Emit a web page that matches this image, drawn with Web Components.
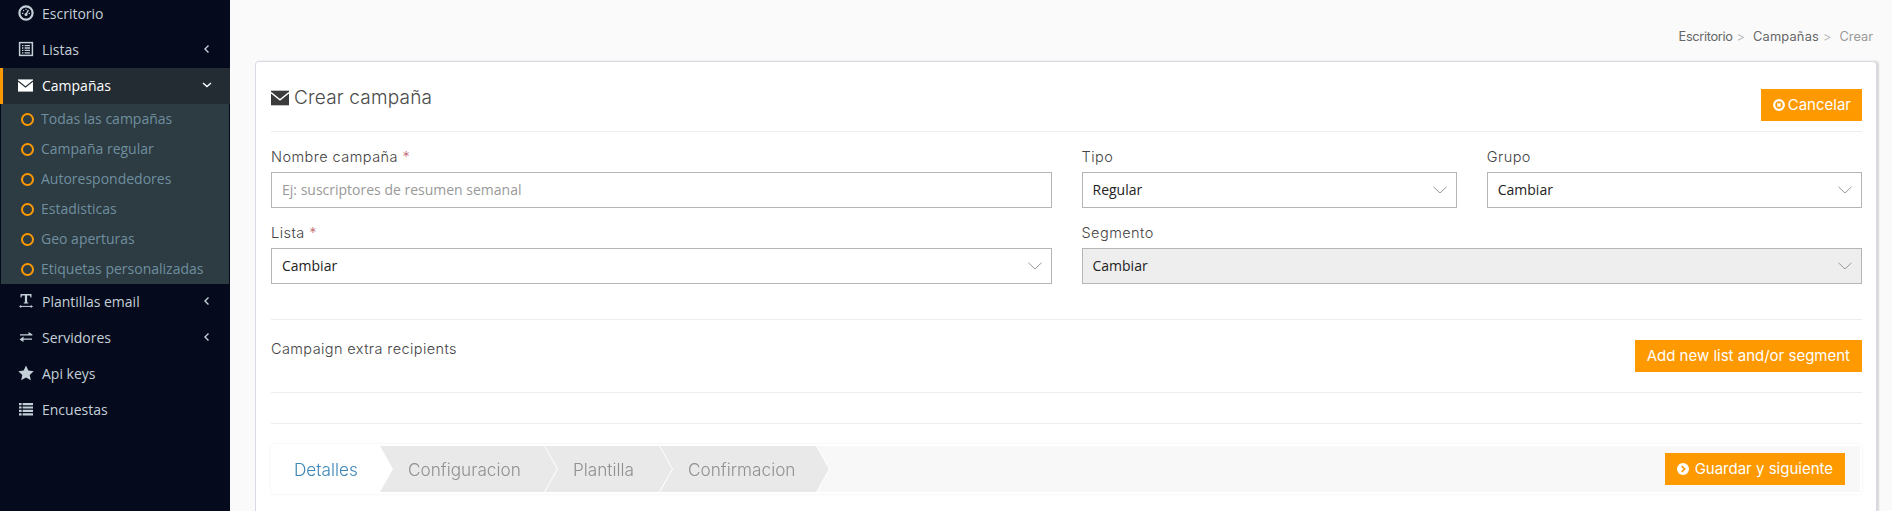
<!DOCTYPE html>
<html lang="es">
<head>
<meta charset="utf-8">
<title>Crear campaña</title>
<style>
    html, body { margin: 0; height: 100%; overflow: hidden; background: #fafafa; }
</style>
</head>
<body>
<app-shell>
    <side-nav slot="nav">
        <nav-item icon="gauge">Escritorio</nav-item>
        <nav-item icon="listalt" arrow="left">Listas</nav-item>
        <nav-item icon="envelope" arrow="down" active>Campañas</nav-item>
        <sub-menu>
            <sub-item>Todas las campañas</sub-item>
            <sub-item>Campaña regular</sub-item>
            <sub-item>Autorespondedores</sub-item>
            <sub-item>Estadisticas</sub-item>
            <sub-item>Geo aperturas</sub-item>
            <sub-item>Etiquetas personalizadas</sub-item>
        </sub-menu>
        <nav-item icon="textwidth" arrow="left">Plantillas email</nav-item>
        <nav-item icon="exchange" arrow="left">Servidores</nav-item>
        <nav-item icon="star">Api keys</nav-item>
        <nav-item icon="list">Encuestas</nav-item>
    </side-nav>
    <bread-crumbs>
        <crumb-link style="letter-spacing:-.35px">Escritorio</crumb-link>
        <crumb-link style="letter-spacing:.2px">Campañas</crumb-link>
        <crumb-link current>Crear</crumb-link>
    </bread-crumbs>
    <campaign-card>
        <span slot="title">Crear campaña</span>
        <action-button slot="action" icon="cancel">Cancelar</action-button>
        <form-grid>
            <form-field label="Nombre campaña" required>
                <text-input placeholder="Ej: suscriptores de resumen semanal"></text-input>
            </form-field>
            <split-fields>
                <form-field label="Tipo"><select-box>Regular</select-box></form-field>
                <form-field label="Grupo"><select-box>Cambiar</select-box></form-field>
            </split-fields>
            <form-field label="Lista" required><select-box>Cambiar</select-box></form-field>
            <form-field label="Segmento"><select-box disabled>Cambiar</select-box></form-field>
        </form-grid>
        <extra-recipients>
            <span>Campaign extra recipients</span>
            <action-button slot="action">Add new list and/or segment</action-button>
        </extra-recipients>
        <wizard-bar>
            <wizard-step current style="--w:119px">Detalles</wizard-step>
            <wizard-step style="--w:178px">Configuracion</wizard-step>
            <wizard-step style="--w:128px">Plantilla</wizard-step>
            <wizard-step style="--w:170px">Confirmacion</wizard-step>
            <action-button slot="action" icon="next">Guardar y siguiente</action-button>
        </wizard-bar>
    </campaign-card>
</app-shell>

<script>
const SANS = '"Open Sans", "Noto Sans", sans-serif';
const HEAD = 'Inter, "Open Sans", sans-serif';

const ICONS = {
    gauge: `<circle cx="8" cy="8" r="6.6" fill="none" stroke="currentColor" stroke-width="2.2"/>
            <path d="M8 9.5 10.4 5" stroke="currentColor" stroke-width="1.5"/>
            <circle cx="8" cy="9.6" r="1.5" fill="currentColor"/>
            <path d="M4 8.4h1.3M5.2 5.2l.9.8M8 3.8v1.2M12 8.4h-1.3" stroke="currentColor" stroke-width="1.1"/>`,
    listalt: `<rect x="1.6" y="1.6" width="12.8" height="12.8" fill="none" stroke="currentColor" stroke-width="1.5"/>
            <path d="M4 4.6h1.4M6.6 4.6H12M4 7h1.4M6.6 7H12M4 9.4h1.4M6.6 9.4H12M4 11.8h1.4M6.6 11.8H12" stroke="currentColor" stroke-width="1.3"/>`,
    envelope: `<path d="M0 1.5h16v13H0z" fill="currentColor"/>
            <path d="M0 3.2 8 9.6l8-6.4" fill="none" stroke="var(--icon-cut, #222c32)" stroke-width="1.2"/>`,
    textwidth: `<path d="M2.5 1h11v3.4h-1L12 2.6H9.1v6.6l1.2.5v.8H5.7v-.8l1.2-.5V2.6H4l-.5 1.8h-1z" fill="currentColor"/>
            <path d="M2.4 13.4h11.2" stroke="currentColor" stroke-width="1"/>
            <path d="M1 13.4l2.2-1.5v3zM15 13.4l-2.2-1.5v3z" fill="currentColor"/>`,
    exchange: `<path d="M2 5.2h8.5V3L14.5 5.6l-.2.8H2zM14 9.6H5.5V7.6L1.5 10.4l4 2.6v-2.2H14z" fill="currentColor"/>`,
    star: `<path d="M8 .6l2.3 4.9 5.4.7-4 3.7 1.1 5.4L8 12.6l-4.8 2.7 1.1-5.4-4-3.7 5.4-.7z" fill="currentColor"/>`,
    list: `<path d="M1 2h2.6v2.2H1zM4.6 2H15v2.2H4.6zM1 5.4h2.6v2.2H1zM4.6 5.4H15v2.2H4.6zM1 8.8h2.6V11H1zM4.6 8.8H15V11H4.6zM1 12.2h2.6v2.2H1zM4.6 12.2H15v2.2H4.6z" fill="currentColor"/>`,
    cancel: `<circle cx="8" cy="8" r="6.4" fill="none" stroke="currentColor" stroke-width="3"/>
            <path d="M5.8 5.8l4.4 4.4M10.2 5.8l-4.4 4.4" stroke="currentColor" stroke-width="2"/>`,
    next: `<circle cx="8" cy="8" r="8" fill="currentColor"/>
            <path d="M6.3 4.2 10.2 8l-3.9 3.8" fill="none" stroke="#ff9900" stroke-width="2.3"/>`
};

// small helper, every element here is just a template + open shadow root
function define(name, css, html) {
    customElements.define(name, class extends HTMLElement {
        constructor() {
            super();
            this.attachShadow({ mode: 'open' });
            this.shadowRoot.innerHTML = `<style>${css}</style>${typeof html === 'function' ? html(this) : html}`;
        }
    });
}

define('app-shell', `
    :host { display: grid; grid-template-columns: 230px 1fr; height: 511px; overflow: hidden; background: #fafafa; }
    .nav { background: #050a1c; overflow: hidden; }
    .main { min-width: 0; display: flex; flex-direction: column; }
`, `<div class="nav"><slot name="nav"></slot></div><div class="main"><slot></slot></div>`);

define('side-nav', `
    :host { display: block; margin-top: -4px; font: 400 14px ${SANS}; }
`, `<slot></slot>`);

define('nav-item', `
    :host { display: flex; align-items: center; height: 36px; color: #c4d0d8; box-sizing: border-box; padding: 0 0 2px 18px; }
    :host([active]) { background: #222c32; color: #fff; border-left: 3px solid #ff9900; padding-left: 15px; }
    svg.ico { width: 16px; height: 16px; flex: none; margin-right: 8px; color: #c4d0d8; }
    :host([active]) svg.ico { color: #fff; width: 15px; height: 15px; margin-right: 9px; }
    .label { flex: 1; }
    svg.arrow { width: 10px; height: 10px; margin-right: 18px; fill: none; stroke: currentColor; stroke-width: 1.4; }
`, el => {
    const arrow = el.getAttribute('arrow');
    const d = arrow === 'left' ? 'M6.5 1.5 3 5l3.5 3.5' : 'M1 3l4 3.5L9 3';
    return `<svg class="ico" viewBox="0 0 16 16">${ICONS[el.getAttribute('icon')]}</svg>
        <span class="label"><slot></slot></span>
        ${arrow ? `<svg class="arrow" viewBox="0 0 10 10"><path d="${d}"/></svg>` : ''}`;
});

define('sub-menu', `
    :host { display: block; background: #2d3b42; margin: 0 1px; }
`, `<slot></slot>`);

define('sub-item', `
    :host { display: flex; align-items: center; height: 30px; box-sizing: border-box; padding: 0 0 2px 20px; color: #6f8f9f; font-size: 14px; }
    i { width: 13px; height: 13px; box-sizing: border-box; border: 2.4px solid #ff9900; border-radius: 50%; margin: 2px 7px 0 0; }
`, `<i></i><slot></slot>`);

define('bread-crumbs', `
    :host { display: flex; justify-content: flex-end; align-items: center; height: 61px; padding: 11px 19px 0 0; box-sizing: border-box; font: 400 12.8px ${HEAD}; color: #666; }
`, `<slot></slot>`);

define('crumb-link', `
    :host { display: inline-flex; color: #666; }
    :host([current]) { color: #999; }
    b { font-weight: 400; color: #bbb; margin: 0 8px 0 4px; letter-spacing: 0; }
`, el => `<slot></slot>${el.hasAttribute('current') ? '' : '<b>&gt;</b>'}`);

define('campaign-card', `
    :host { display: block; flex: 1; margin: 0 15px 0 25px; background: #fff; border: 1px solid #d9d9e3; border-bottom: 0; border-radius: 4px 4px 0 0; box-shadow: 2px 0 2px rgba(0,0,0,.14); padding: 0 14px 0 15px; }
    .head { display: flex; justify-content: space-between; align-items: flex-start; padding: 22px 0 10px; border-bottom: 1px solid #eee; }
    h3 { margin: 0; display: flex; align-items: center; font: 300 19px/28px ${HEAD}; letter-spacing: .2px; color: #4a4a4a; }
    svg { width: 18px; height: 18px; margin-right: 5px; color: #3c3c3c; --icon-cut: #fff; }
    .act { margin-top: 5px; display: flex; }
`, `<div class="head">
        <h3><svg viewBox="0 0 16 16">${ICONS.envelope}</svg><slot name="title"></slot></h3>
        <div class="act"><slot name="action"></slot></div>
    </div>
    <slot></slot>`);

define('form-grid', `
    :host { display: grid; grid-template-columns: 1fr 1fr; gap: 15px 30px; padding: 15px 0 35px; border-bottom: 1px solid #eee; }
`, `<slot></slot>`);

define('split-fields', `
    :host { display: grid; grid-template-columns: 1fr 1fr; gap: 30px; }
`, `<slot></slot>`);

define('form-field', `
    :host { display: block; min-width: 0; }
    label { display: block; font: 300 14.5px/20px ${HEAD}; color: #444; margin-bottom: 5px; letter-spacing: .45px; }
    em { font-style: normal; color: #c0606a; }
`, el => `<label>${el.getAttribute('label')}${el.hasAttribute('required') ? ' <em>*</em>' : ''}</label><slot></slot>`);

define('text-input', `
    :host { display: block; }
    input { display: block; width: 100%; height: 36px; box-sizing: border-box; border: 1px solid #b5b5b5; padding: 0 10px 2px; outline: 0; font: 400 14px ${SANS}; color: #222; background: #fff; border-radius: 0; }
    input::placeholder { color: #999; opacity: 1; }
`, el => `<input type="text" placeholder="${el.getAttribute('placeholder')}">`);

define('select-box', `
    :host { display: flex; align-items: center; justify-content: space-between; height: 36px; box-sizing: border-box; border: 1px solid #b5b5b5; padding: 0 9px 2px 10px; font: 400 14px ${SANS}; color: #222; background: #fff; }
    :host([disabled]) { background: #eee; }
    svg { width: 14px; height: 8px; fill: none; stroke: #999; stroke-width: 1; margin-top: 2px; }
`, `<slot></slot><svg viewBox="0 0 14 8"><path d="M.5 .8 7 7l6.5-6.2"/></svg>`);

define('extra-recipients', `
    :host { display: flex; justify-content: space-between; align-items: flex-start; padding: 20px 0; border-bottom: 1px solid #eee; font: 300 14.5px/20px ${HEAD}; color: #444; letter-spacing: .4px; }
    .txt { margin-top: -1px; }
`, `<div class="txt"><slot></slot></div><slot name="action"></slot>`);

define('wizard-bar', `
    :host { display: block; padding-top: 30px; }
    .rule { border-top: 1px solid #eee; margin-bottom: 20px; }
    .outer { padding: 2px; background: #fff; border-radius: 4px; box-shadow: 0 0 3px rgba(0,0,0,.07); }
    .bar { display: flex; align-items: center; justify-content: space-between; height: 46px; padding-right: 15px; background: #f8f8f8; }
    .steps { display: flex; height: 46px; }
`, `<div class="rule"></div>
    <div class="outer"><div class="bar">
        <div class="steps"><slot></slot></div>
        <slot name="action"></slot>
    </div></div>`);

define('action-button', `
    :host { display: inline-flex; align-items: center; height: 32px; padding: 0 12px; background: #ff9900; color: #fff; font: 400 15px ${HEAD}; white-space: nowrap; box-sizing: border-box; letter-spacing: 0; }
    svg { width: 12px; height: 12px; margin-right: 3px; }
    :host([icon="cancel"]) { padding-right: 11px; }
    :host([icon="next"]) svg { margin-right: 6px; }
    span { display: block; margin-top: -1px; }
`, el => {
    const icon = el.getAttribute('icon');
    return `${icon ? `<svg viewBox="0 0 16 16">${ICONS[icon]}</svg>` : ''}<span><slot></slot></span>`;
});

define('wizard-step', `
    :host { display: block; width: var(--w); margin-right: -13px; flex: none; filter: drop-shadow(1px 0 0 #fff); font: 300 17.2px ${HEAD}; color: #909090; }
    :host([current]) { color: #3f86b8; z-index: 4; }
    :host(:nth-child(2)) { z-index: 3; }
    :host(:nth-child(3)) { z-index: 2; }
    div { height: 100%; box-sizing: border-box; display: flex; align-items: center; padding-left: 29px; background: #e9e9e9;
        clip-path: polygon(0 0, calc(100% - 13px) 0, 100% 50%, calc(100% - 13px) 100%, 0 100%); }
    :host([current]) div { background: #fff; padding-left: 21px; }
`, `<div><slot></slot></div>`);
</script>
</body>
</html>
